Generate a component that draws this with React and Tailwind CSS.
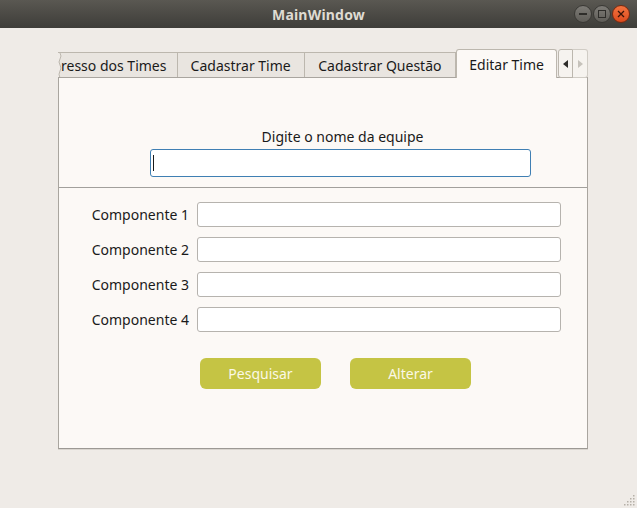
import React from "react";

const font = { fontFamily: '"Noto Sans", "DejaVu Sans", sans-serif' };

function Field({ label }) {
  return (
    <div className="flex items-center h-[25px]">
      <div className="w-[131px] pr-[8px] text-right text-[14px] text-[#1a1a1a] leading-none">{label}</div>
      <div className="w-[364px] h-[25px] bg-white border border-[#b6b3ae] rounded-[3px]" />
    </div>
  );
}

export default function App() {
  return (
    <div style={font} className="w-[637px] h-[508px] bg-[#efebe7] flex flex-col overflow-hidden relative">
      {/* Title bar */}
      <div className="h-[28px] bg-gradient-to-b from-[#5a5852] to-[#3e3d39] flex items-center justify-center relative shrink-0">
        <span className="text-[14px] font-bold text-[#dfdbd2] tracking-[0.2px]">MainWindow</span>
        <div className="absolute right-[7px] top-[5px] flex gap-[1px]">
          <div className="w-[18px] h-[18px] rounded-full bg-gradient-to-b from-[#7d7b76] to-[#5f5d58] border border-[#3a3935] flex items-center justify-center">
            <div className="w-[8px] h-[1.5px] bg-[#2e2d2a]" />
          </div>
          <div className="w-[18px] h-[18px] rounded-full bg-gradient-to-b from-[#7d7b76] to-[#5f5d58] border border-[#3a3935] flex items-center justify-center">
            <div className="w-[8px] h-[8px] border border-[#2e2d2a]" />
          </div>
          <div className="w-[18px] h-[18px] rounded-full bg-gradient-to-b from-[#f2733f] to-[#dd4a1c] border border-[#7a2a10] flex items-center justify-center">
            <svg width="8" height="8" viewBox="0 0 8 8"><path d="M1 1L7 7M7 1L1 7" stroke="#3a1408" strokeWidth="1.3" /></svg>
          </div>
        </div>
      </div>

      {/* Body */}
      <div className="flex-1 pl-[58px] pt-[21px]">
        <div className="w-[530px] flex flex-col">
          {/* Tab bar */}
          <div className="flex items-end h-[28px] relative">
            <div className="relative w-[120px] h-[25px] bg-[#e9e5e0] border-t border-r border-[#bcb7ae] flex items-center overflow-hidden">
              <span className="text-[14px] text-[#1a1a1a] whitespace-nowrap ml-[3px]">resso dos Times</span>
              <svg className="absolute left-0 top-0" width="5" height="25" viewBox="0 0 5 25">
                <path d="M0 0 L2 0 Q4 3 2 6 Q0 9 2 12 Q4 15 2 18 Q0 21 2 25 L0 25 Z" fill="#efebe7" />
                <path d="M2 0 Q4 3 2 6 Q0 9 2 12 Q4 15 2 18 Q0 21 2 25" stroke="#bcb7ae" fill="none" strokeWidth="1" />
              </svg>
            </div>
            <div className="w-[127px] h-[25px] bg-[#e9e5e0] border-t border-r border-[#bcb7ae] flex items-center justify-center">
              <span className="text-[14px] text-[#1a1a1a] whitespace-nowrap">Cadastrar Time</span>
            </div>
            <div className="w-[152px] h-[25px] bg-[#e9e5e0] border-t border-r border-[#bcb7ae] flex items-center justify-center">
              <span className="text-[14px] text-[#1a1a1a] whitespace-nowrap">Cadastrar Questão</span>
            </div>
            <div className="w-[101px] h-[29px] -mb-[1px] z-10 bg-[#fcf9f6] border-t border-l border-r border-[#bcb7ae] rounded-t-[3px] flex items-center justify-center">
              <span className="text-[14px] text-[#1a1a1a] whitespace-nowrap">Editar Time</span>
            </div>
            <div className="flex h-[29px] ml-[1px] -mb-[1px] z-10">
              <div className="w-[15px] bg-[#f6f3ef] border border-[#bcb7ae] rounded-l-[3px] flex items-center justify-center">
                <svg width="5" height="8" viewBox="0 0 5 8"><path d="M5 0L0 4L5 8Z" fill="#2e2d2a" /></svg>
              </div>
              <div className="w-[15px] bg-[#f6f3ef] border-t border-b border-r border-[#d0ccc5] rounded-r-[3px] flex items-center justify-center">
                <svg width="5" height="8" viewBox="0 0 5 8"><path d="M0 0L5 4L0 8Z" fill="#c6c2bb" /></svg>
              </div>
            </div>
            <div className="flex-1" />
          </div>

          {/* Pane */}
          <div className="h-[372px] bg-[#fcf9f6] border border-[#a9a59f] border-b-[#9c9994] shadow-[0_1px_0_#d9d5cf] flex flex-col">
            <div className="pt-[49px] pl-[91px]">
              <div className="w-[380px] text-center text-[14px] text-[#1a1a1a] leading-[20px] pl-[5px]">Digite o nome da equipe</div>
              <div className="mt-[2px] w-[381px] h-[28px] bg-white border border-[#3f7fb3] rounded-[3px] flex items-center pl-[2px]">
                <div className="w-[1px] h-[16px] bg-[#1a1a1a]" />
              </div>
            </div>
            <div className="mt-[10px] h-[1px] bg-[#a2a09c]" />
            <div className="mt-[14px] flex flex-col gap-[10px] pl-[7px]">
              <Field label="Componente 1" />
              <Field label="Componente 2" />
              <Field label="Componente 3" />
              <Field label="Componente 4" />
            </div>
            <div className="mt-[26px] flex pl-[141px] gap-[29px]">
              <div className="w-[121px] h-[31px] rounded-[6px] bg-[#c5c444] flex items-center justify-center text-[14px] text-[#fbf8e6]">Pesquisar</div>
              <div className="w-[121px] h-[31px] rounded-[6px] bg-[#c5c444] flex items-center justify-center text-[14px] text-[#fbf8e6]">Alterar</div>
            </div>
          </div>
        </div>
      </div>

      {/* Resize grip */}
      <svg className="absolute right-[2px] bottom-[2px]" width="12" height="12" viewBox="0 0 12 12">
        {[[10, 1], [7, 4], [10, 4], [4, 7], [7, 7], [10, 7], [1, 10], [4, 10], [7, 10], [10, 10]].map(([x, y], i) => (
          <rect key={i} x={x} y={y} width="1.5" height="1.5" fill="#b5b0a8" />
        ))}
      </svg>
    </div>
  );
}
